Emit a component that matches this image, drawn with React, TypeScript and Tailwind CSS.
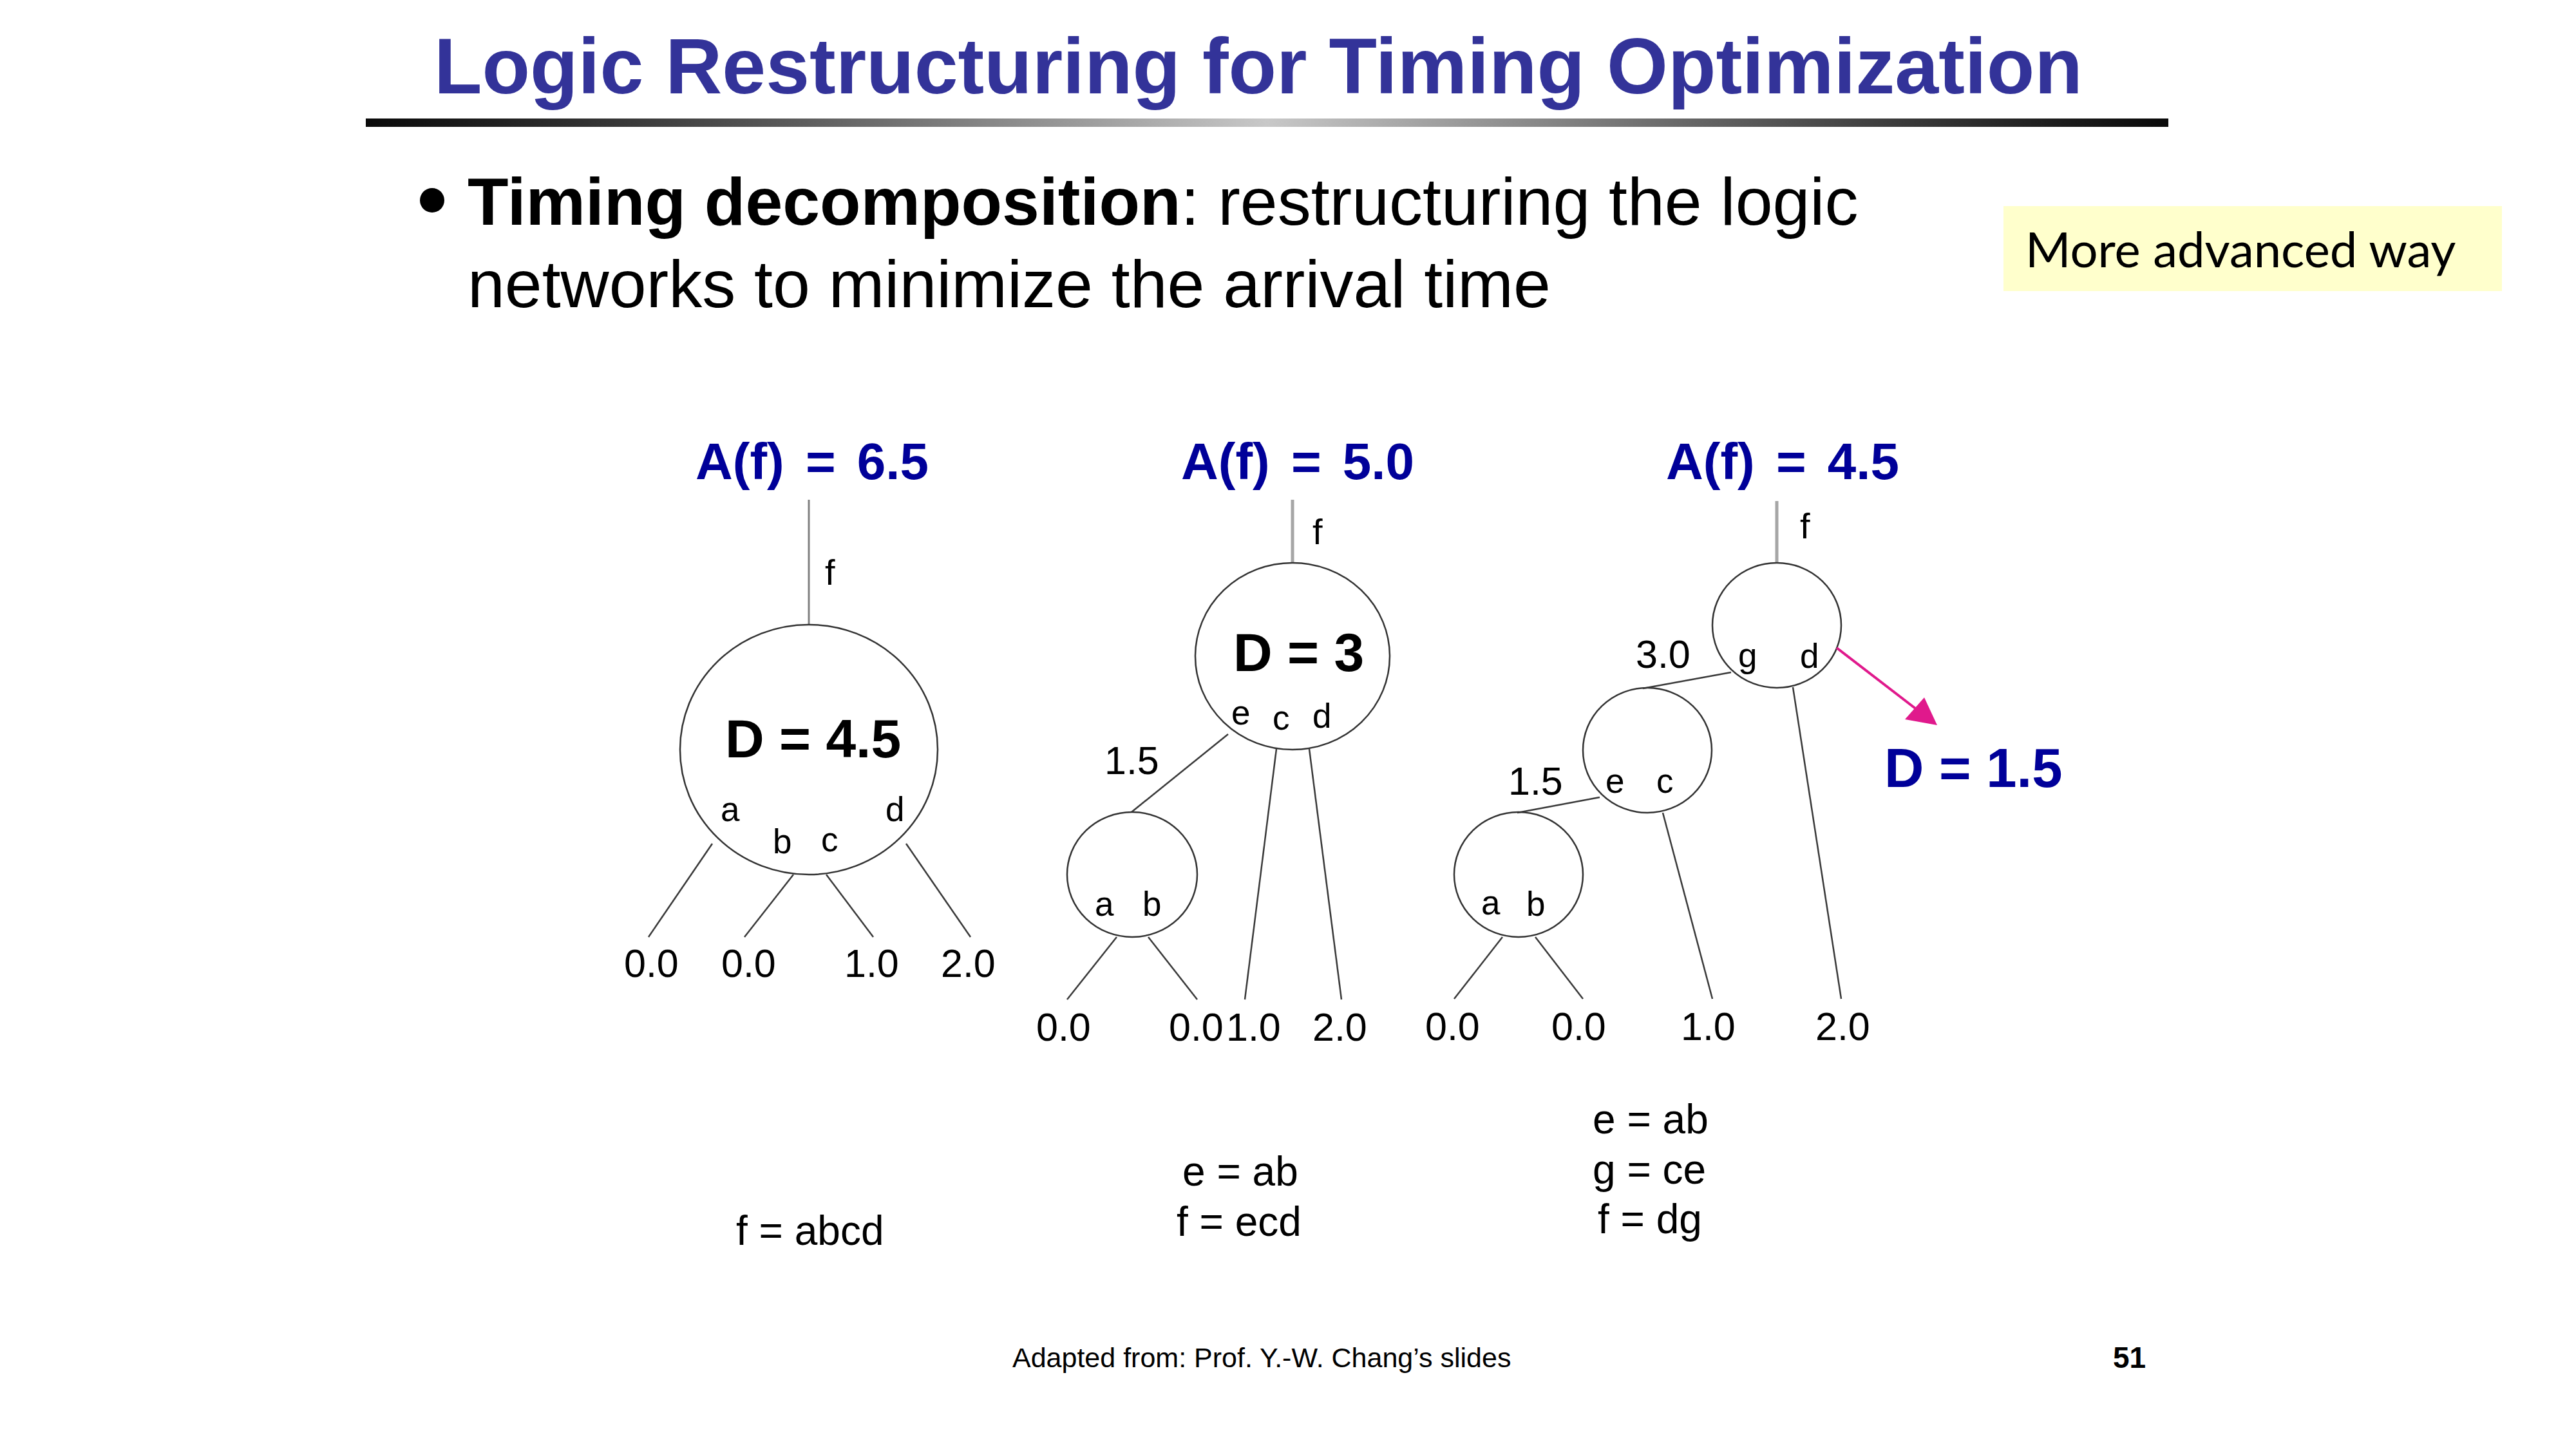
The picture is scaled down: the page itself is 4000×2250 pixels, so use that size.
export default function App() {
  const leaf = 61;
  const lbl = 53;
  const ln = "#3a3a3a";
  return (
    <div className="w-[4000px] h-[2250px] bg-white overflow-hidden flex flex-col font-['Liberation_Sans',Arial,sans-serif] text-black">
      <div className="ml-[568px] w-[2799px] mt-[43px] flex flex-col">
        <h1 className="pl-[106px] text-[122px] leading-[121px] font-bold text-[#333399] whitespace-nowrap">
          Logic Restructuring for Timing Optimization
        </h1>
        <div className="mt-[20px] h-[13px] bg-gradient-to-r from-[#0a0a0a] via-[#c8c8c8] to-[#0a0a0a]" />
      </div>

      <div className="mt-[52px] flex items-start">
        <div className="ml-[652px] mt-[43px] w-[38px] h-[38px] rounded-full bg-black shrink-0" />
        <p className="ml-[36px] w-[2385px] shrink-0 text-[104px] leading-[128px] whitespace-nowrap">
          <span className="font-bold">Timing decomposition</span>: restructuring the logic
          <br />
          networks to minimize the arrival time
        </p>
        <div className="mt-[71px] w-[774px] h-[132px] shrink-0 bg-[#ffffcc] pl-[34px] font-['Lato',sans-serif] text-[76px] leading-[132px] whitespace-nowrap">
          More advanced way
        </div>
      </div>

      <svg
        className="ml-[900px] mt-[135px] shrink-0 font-['Liberation_Sans',Arial,sans-serif]"
        width={2400}
        height={1320}
        viewBox="900 640 2400 1320"
      >
        {/* Diagram 1 */}
        <text x={1080} y={744} fontSize={80} fontWeight="bold" fill="#000099" wordSpacing={11}>A(f) = 6.5</text>
        <line x1={1256} y1={776} x2={1256} y2={970} stroke="#808080" strokeWidth={3} />
        <text x={1281} y={908} fontSize={56}>f</text>
        <ellipse cx={1256} cy={1164} rx={200} ry={194} fill="none" stroke="#333" strokeWidth={2.5} />
        <text x={1126} y={1176} fontSize={84} fontWeight="bold">D = 4.5</text>
        <text x={1119} y={1275} fontSize={lbl}>a</text>
        <text x={1200} y={1325} fontSize={lbl}>b</text>
        <text x={1275} y={1322} fontSize={lbl}>c</text>
        <text x={1375} y={1275} fontSize={lbl}>d</text>
        <line x1={1106} y1={1310} x2={1007} y2={1455} stroke={ln} strokeWidth={2.5} />
        <line x1={1232} y1={1358} x2={1156} y2={1455} stroke={ln} strokeWidth={2.5} />
        <line x1={1283} y1={1358} x2={1356} y2={1455} stroke={ln} strokeWidth={2.5} />
        <line x1={1407} y1={1310} x2={1507} y2={1455} stroke={ln} strokeWidth={2.5} />
        <text x={969} y={1517} fontSize={leaf}>0.0</text>
        <text x={1120} y={1517} fontSize={leaf}>0.0</text>
        <text x={1311} y={1517} fontSize={leaf}>1.0</text>
        <text x={1461} y={1517} fontSize={leaf}>2.0</text>
        <text x={1143} y={1933} fontSize={64}>f = abcd</text>

        {/* Diagram 2 */}
        <text x={1834} y={744} fontSize={80} fontWeight="bold" fill="#000099" wordSpacing={11}>A(f) = 5.0</text>
        <line x1={2007} y1={776} x2={2007} y2={874} stroke="#a6a6a6" strokeWidth={5} />
        <text x={2038} y={845} fontSize={56}>f</text>
        <ellipse cx={2007} cy={1019} rx={151} ry={145} fill="none" stroke="#333" strokeWidth={2.5} />
        <text x={1915} y={1042} fontSize={84} fontWeight="bold">D = 3</text>
        <text x={1912} y={1125} fontSize={lbl}>e</text>
        <text x={1976} y={1133} fontSize={lbl}>c</text>
        <text x={2038} y={1130} fontSize={lbl}>d</text>
        <text x={1715} y={1202} fontSize={leaf}>1.5</text>
        <line x1={1907} y1={1140} x2={1757} y2={1261} stroke={ln} strokeWidth={2.5} />
        <ellipse cx={1758} cy={1358} rx={101} ry={97} fill="none" stroke="#333" strokeWidth={2.5} />
        <text x={1700} y={1422} fontSize={lbl}>a</text>
        <text x={1774} y={1422} fontSize={lbl}>b</text>
        <line x1={1734} y1={1455} x2={1657} y2={1552} stroke={ln} strokeWidth={2.5} />
        <line x1={1783} y1={1455} x2={1859} y2={1552} stroke={ln} strokeWidth={2.5} />
        <line x1={1982} y1={1163} x2={1933} y2={1552} stroke={ln} strokeWidth={2.5} />
        <line x1={2033} y1={1163} x2={2083} y2={1552} stroke={ln} strokeWidth={2.5} />
        <text x={1609} y={1616} fontSize={leaf}>0.0</text>
        <text x={1815} y={1616} fontSize={leaf}>0.0</text>
        <text x={1904} y={1616} fontSize={leaf}>1.0</text>
        <text x={2038} y={1616} fontSize={leaf}>2.0</text>
        <text x={1836} y={1841} fontSize={64}>e = ab</text>
        <text x={1827} y={1919} fontSize={64}>f = ecd</text>

        {/* Diagram 3 */}
        <text x={2587} y={744} fontSize={80} fontWeight="bold" fill="#000099" wordSpacing={11}>A(f) = 4.5</text>
        <line x1={2759} y1={778} x2={2759} y2={874} stroke="#a6a6a6" strokeWidth={5} />
        <text x={2795} y={836} fontSize={56}>f</text>
        <ellipse cx={2759} cy={971} rx={100} ry={97} fill="none" stroke="#333" strokeWidth={2.5} />
        <text x={2699} y={1036} fontSize={lbl}>g</text>
        <text x={2795} y={1037} fontSize={lbl}>d</text>
        <text x={2540} y={1037} fontSize={leaf}>3.0</text>
        <line x1={2688} y1={1044} x2={2551} y2={1069} stroke={ln} strokeWidth={2.5} />
        <ellipse cx={2558} cy={1165} rx={100} ry={97} fill="none" stroke="#333" strokeWidth={2.5} />
        <text x={2493} y={1231} fontSize={lbl}>e</text>
        <text x={2572} y={1231} fontSize={lbl}>c</text>
        <text x={2342} y={1234} fontSize={leaf}>1.5</text>
        <line x1={2484} y1={1238} x2={2356} y2={1262} stroke={ln} strokeWidth={2.5} />
        <ellipse cx={2358} cy={1358} rx={100} ry={97} fill="none" stroke="#333" strokeWidth={2.5} />
        <text x={2300} y={1420} fontSize={lbl}>a</text>
        <text x={2370} y={1422} fontSize={lbl}>b</text>
        <line x1={2333} y1={1455} x2={2258} y2={1551} stroke={ln} strokeWidth={2.5} />
        <line x1={2384} y1={1455} x2={2458} y2={1551} stroke={ln} strokeWidth={2.5} />
        <line x1={2582} y1={1262} x2={2659} y2={1551} stroke={ln} strokeWidth={2.5} />
        <line x1={2784} y1={1067} x2={2859} y2={1551} stroke={ln} strokeWidth={2.5} />
        <text x={2213} y={1615} fontSize={leaf}>0.0</text>
        <text x={2409} y={1615} fontSize={leaf}>0.0</text>
        <text x={2610} y={1615} fontSize={leaf}>1.0</text>
        <text x={2819} y={1615} fontSize={leaf}>2.0</text>
        <line x1={2852} y1={1006} x2={2978} y2={1103} stroke="#e0198c" strokeWidth={4} />
        <polygon points="3008,1126 2958,1117 2988,1083" fill="#e0198c" />
        <text x={2926} y={1222} fontSize={85} fontWeight="bold" fill="#000099">D = 1.5</text>
        <text x={2473} y={1760} fontSize={64}>e = ab</text>
        <text x={2473} y={1838} fontSize={64}>g = ce</text>
        <text x={2481} y={1915} fontSize={64}>f = dg</text>
      </svg>

      <div className="mt-[123px] flex items-start h-[50px]">
        <span className="ml-[1572px] w-[785px] shrink-0 text-[43px] leading-[50px] whitespace-nowrap">
          Adapted from: Prof. Y.-W. Chang’s slides
        </span>
        <span className="ml-[924px] text-[46px] font-bold leading-[50px]">51</span>
      </div>
    </div>
  );
}
